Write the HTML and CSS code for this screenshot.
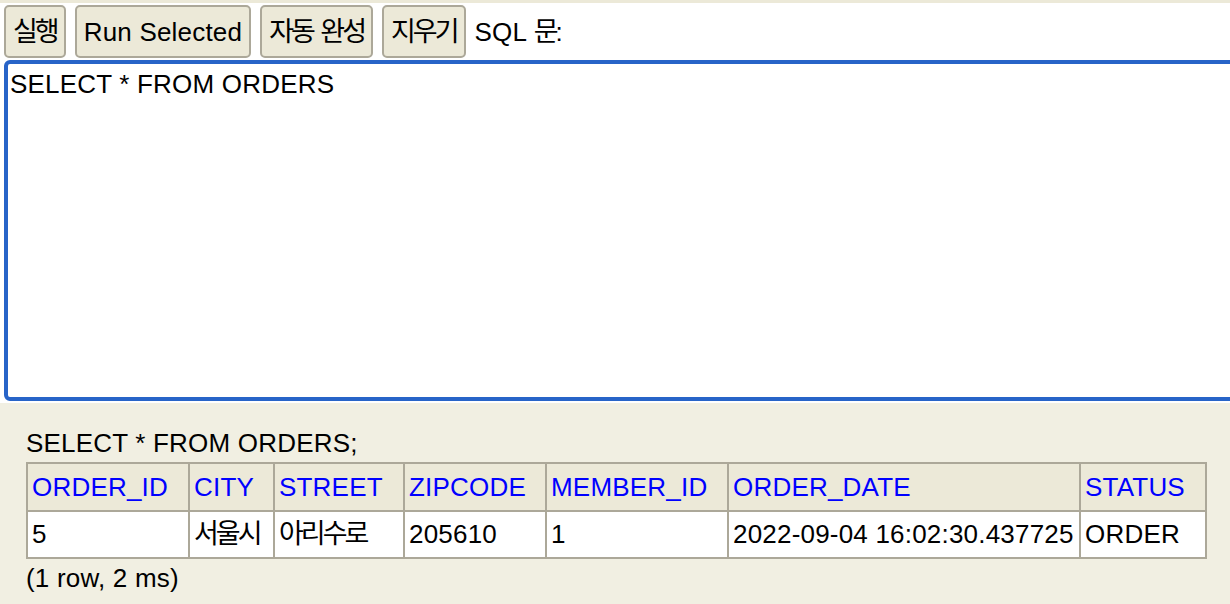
FILE: index.html
```html
<!DOCTYPE html>
<html lang="ko">
<head>
<meta charset="utf-8">
<title>H2 Console</title>
<link rel="stylesheet" href="styles.css">
</head>
<body>
<div class="query-frame">
  <div class="toolbar">
    <button class="btn"><span class="ko">실행</span></button>
    <button class="btn">Run Selected</button>
    <button class="btn"><span class="ko">자동</span> <span class="ko">완성</span></button>
    <button class="btn"><span class="ko">지우기</span></button>
    <span class="label">SQL <span class="ko">문</span>:</span>
  </div>
  <textarea class="sql" spellcheck="false">SELECT * FROM ORDERS</textarea>
</div>
<div class="result-frame">
  <div class="result-title">SELECT * FROM ORDERS;</div>
  <table class="result">
    <colgroup>
      <col class="c-id"><col class="c-city"><col class="c-street"><col class="c-zip"><col class="c-member"><col class="c-date"><col class="c-status">
    </colgroup>
    <thead>
      <tr><th>ORDER_ID</th><th>CITY</th><th>STREET</th><th>ZIPCODE</th><th>MEMBER_ID</th><th>ORDER_DATE</th><th>STATUS</th></tr>
    </thead>
    <tbody>
      <tr><td>5</td><td><span class="ko">서울시</span></td><td><span class="ko">아리수로</span></td><td>205610</td><td>1</td><td>2022-09-04 16:02:30.437725</td><td>ORDER</td></tr>
    </tbody>
  </table>
  <div class="result-info">(1 row, 2 ms)</div>
</div>
</body>
</html>
```
FILE: styles.css
```css
html, body {
  margin: 0;
  padding: 0;
}
body {
  width: 1230px;
  height: 604px;
  overflow: hidden;
  display: flex;
  flex-direction: column;
  background: #ffffff;
  color: #000000;
  font-family: "Liberation Sans", "Noto Sans CJK KR", Arial, sans-serif;
  font-size: 26px;
  line-height: 30px;
  letter-spacing: 0.2px;
}
.ko {
  font-size: 27px;
  letter-spacing: -3px;
  line-height: 30px;
}
.query-frame {
  height: 403px;
  flex: none;
  box-sizing: border-box;
  border-top: 3px solid #ece9d8;
  padding: 2px 0 0 4px;
  overflow: hidden;
}
.toolbar {
  display: flex;
  align-items: center;
  gap: 9px;
  height: 53px;
}
.btn {
  font: inherit;
  letter-spacing: 0.2px;
  line-height: 30px;
  height: 53px;
  padding: 0 7px;
  border: 2px solid #aca899;
  border-radius: 5px;
  background: #ece9d8;
  color: #000000;
  margin: 0;
}
.label {
  white-space: nowrap;
}
.sql {
  display: block;
  box-sizing: border-box;
  margin: 2px 0 0 0;
  width: 1250px;
  height: 341px;
  border: 4px solid #2864c8;
  border-radius: 6px;
  padding: 5px 2px;
  font: inherit;
  letter-spacing: 0.2px;
  line-height: 30px;
  color: #000000;
  background: #ffffff;
  resize: none;
  outline: none;
  overflow: hidden;
}
.result-frame {
  flex: 1;
  background: #f1efe2;
  padding: 25px 0 0 26px;
}
.result {
  border-collapse: collapse;
  table-layout: fixed;
  width: 1181px;
  margin: 4px 0 4px 0;
}
.result th,
.result td {
  border: 2px solid #aca899;
  text-align: left;
  font-weight: normal;
  white-space: nowrap;
  overflow: hidden;
  line-height: 30px;
}
.result th {
  background: #ece9d8;
  color: #0000ff;
  padding: 8px 4px;
}
.result td {
  background: #ffffff;
  padding: 7px 4px 8px 4px;
}
.c-id { width: 162px; }
.c-city { width: 85px; }
.c-street { width: 130px; }
.c-zip { width: 142px; }
.c-member { width: 182px; }
.c-date { width: 352px; }
.c-status { width: 126px; }
```
